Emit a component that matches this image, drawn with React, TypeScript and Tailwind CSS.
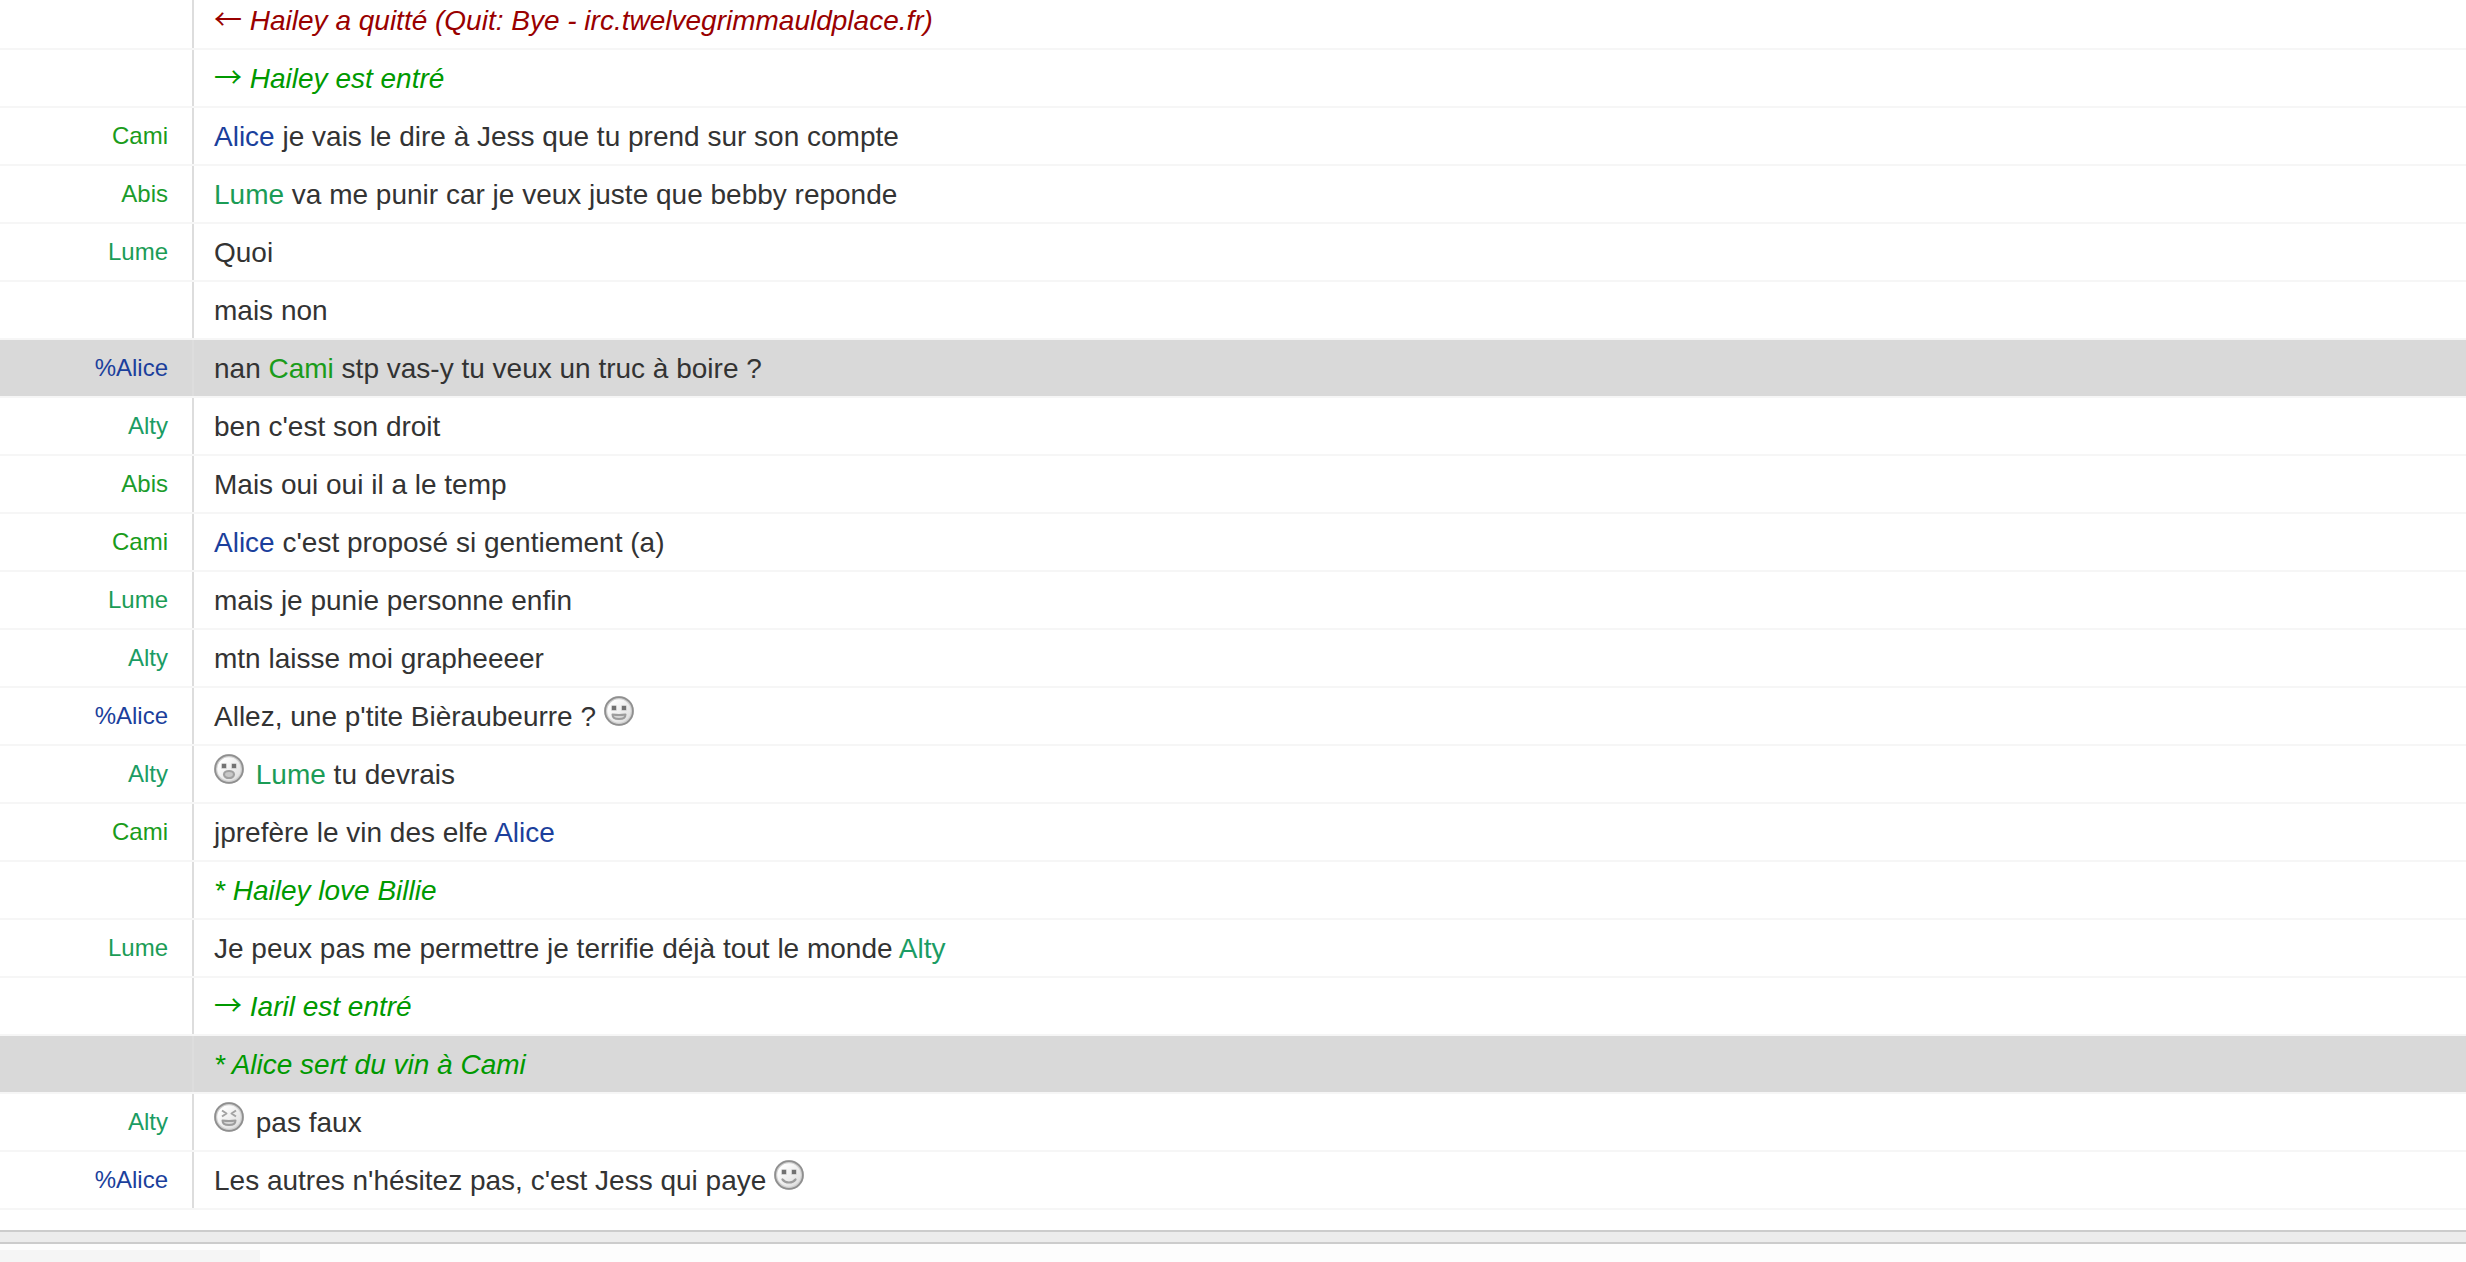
import type { ReactNode } from 'react';

type Mood = 'grin' | 'gasp' | 'laugh' | 'smile';
type Kind = 'message' | 'join' | 'quit' | 'action';

interface Line {
  nick?: string;
  kind?: Kind;
  highlighted?: boolean;
  content: ReactNode;
}

const nickColors: Record<string, string> = {
  Alice: 'text-[#1b3f9c]',
  Cami: 'text-[#1b9c1b]',
  Abis: 'text-[#1b9c2c]',
  Lume: 'text-[#1b9c56]',
  Alty: 'text-[#1b9c64]',
};

const kindColors: Record<Kind, string> = {
  message: 'text-[#333333]',
  join: 'text-[#009900] italic',
  quit: 'text-[#990000] italic',
  action: 'text-[#009900] italic',
};

const Nick = ({ name }: { name: string }) => (
  <span className={nickColors[name.replace('%', '')]}>{name}</span>
);

// Upright arrow in front of join and quit notices
const Arrow = ({ children }: { children: string }) => (
  <span className="font-['Noto_Sans_CJK_SC',sans-serif] leading-none not-italic">{children}</span>
);

const Smiley = ({ mood }: { mood: Mood }) => (
  <svg
    viewBox="0 0 30 30"
    className="inline-block size-[30px] align-baseline"
    fill="none"
    role="img"
    aria-label={mood}
  >
    <defs>
      <linearGradient id={`face-${mood}`} x1="0" y1="0" x2="1" y2="1">
        <stop offset="0.2" stopColor="#ffffff" />
        <stop offset="1" stopColor="#d8d8d8" />
      </linearGradient>
    </defs>
    <circle cx="15" cy="15" r="13.4" fill={`url(#face-${mood})`} stroke="#d0d0d0" strokeWidth="3.2" />
    <circle cx="15" cy="15" r="13.9" stroke="#8f8f8f" strokeWidth="1.8" />
    {mood === 'laugh' ? (
      <path
        d="M8 8.5l4.500 3L8 14.500M22 8.500l-4.500 3 4.500 3"
        stroke="#a2a2a2"
        strokeWidth="2"
        strokeLinejoin="round"
      />
    ) : (
      <>
        <rect x="7" y="9" width="6" height="6" rx="1.5" fill="#d0d0d0" />
        <rect x="17" y="9" width="6" height="6" rx="1.500" fill="#d0d0d0" />
        <rect x="8" y="10" width="4" height="4" fill="#727272" />
        <rect x="18" y="10" width="4" height="4" fill="#727272" />
      </>
    )}
    {mood === 'smile' && (
      <path d="M8.5 19.5c3 4 10 4 13 0" stroke="#9c9c9c" strokeWidth="2.2" strokeLinecap="round" />
    )}
    {(mood === 'grin' || mood === 'laugh') && (
      <path
        d="M8.500 18.500q6.500 1 13 0c0 3.500-2 4.500-6.500 4.500s-6.500-1-6.500-4.500z"
        fill="#d6d6d6"
        stroke="#9c9c9c"
        strokeWidth="2"
        strokeLinejoin="round"
      />
    )}
    {mood === 'gasp' && (
      <ellipse cx="15" cy="20.5" rx="5" ry="3.5" fill="#c8c8c8" stroke="#a0a0a0" strokeWidth="2.200" />
    )}
  </svg>
);

const lines: Line[] = [
  { kind: 'quit', content: <><Arrow>←</Arrow> Hailey a quitté (Quit: Bye - irc.twelvegrimmauldplace.fr)</> },
  { kind: 'join', content: <><Arrow>→</Arrow> Hailey est entré</> },
  { nick: 'Cami', content: <><Nick name="Alice" /> je vais le dire à Jess que tu prend sur son compte</> },
  { nick: 'Abis', content: <><Nick name="Lume" /> va me punir car je veux juste que bebby reponde</> },
  { nick: 'Lume', content: 'Quoi' },
  { content: 'mais non' },
  { nick: '%Alice', highlighted: true, content: <>nan <Nick name="Cami" /> stp vas-y tu veux un truc à boire ?</> },
  { nick: 'Alty', content: "ben c'est son droit" },
  { nick: 'Abis', content: 'Mais oui oui il a le temp' },
  { nick: 'Cami', content: <><Nick name="Alice" /> c'est proposé si gentiement (a)</> },
  { nick: 'Lume', content: 'mais je punie personne enfin' },
  { nick: 'Alty', content: 'mtn laisse moi grapheeeer' },
  { nick: '%Alice', content: <>Allez, une p'tite Bièraubeurre ? <Smiley mood="grin" /></> },
  { nick: 'Alty', content: <><Smiley mood="gasp" />{' '}<span className="ml-1"><Nick name="Lume" /></span> tu devrais</> },
  { nick: 'Cami', content: <>jprefère le vin des elfe <Nick name="Alice" /></> },
  { kind: 'action', content: '* Hailey love Billie' },
  { nick: 'Lume', content: <>Je peux pas me permettre je terrifie déjà tout le monde <Nick name="Alty" /></> },
  { kind: 'join', content: <><Arrow>→</Arrow> Iaril est entré</> },
  { kind: 'action', highlighted: true, content: '* Alice sert du vin à Cami' },
  { nick: 'Alty', content: <><Smiley mood="laugh" />{' '}<span className="ml-1">pas faux</span></> },
  { nick: '%Alice', content: <>Les autres n'hésitez pas, c'est Jess qui paye <Smiley mood="smile" /></> },
];

const LogLine = ({ nick, kind = 'message', highlighted, content }: Line) => (
  <li className={`flex min-h-[58px] border-b-2 border-[#f6f6f6] ${highlighted ? 'bg-[#d9d9d9]' : 'bg-white'}`}>
    <div className="w-[194px] shrink-0 border-r-2 border-[#dddddd] pt-2 pr-6 text-right text-[24px] leading-10">
      {nick && <Nick name={nick} />}
    </div>
    <div className={`min-w-0 flex-1 pt-2 pl-5 text-[28px] leading-[42px] ${kindColors[kind]}`}>{content}</div>
  </li>
);

export default function App() {
  return (
    <div className="flex h-screen flex-col overflow-hidden bg-white font-['Liberation_Sans',Arial,sans-serif]">
      <ul className="-mt-2 shrink-0 pb-5">
        {lines.map((line, index) => (
          <LogLine key={index} {...line} />
        ))}
      </ul>
      <div className="h-[14px] shrink-0 border-y-2 border-[#cccccc] bg-[#ececec]" />
      <footer className="flex-1 bg-[#fdfdfd] pt-[6px]">
        <div className="h-full w-[260px] bg-[#f5f5f5]" />
      </footer>
    </div>
  );
}
